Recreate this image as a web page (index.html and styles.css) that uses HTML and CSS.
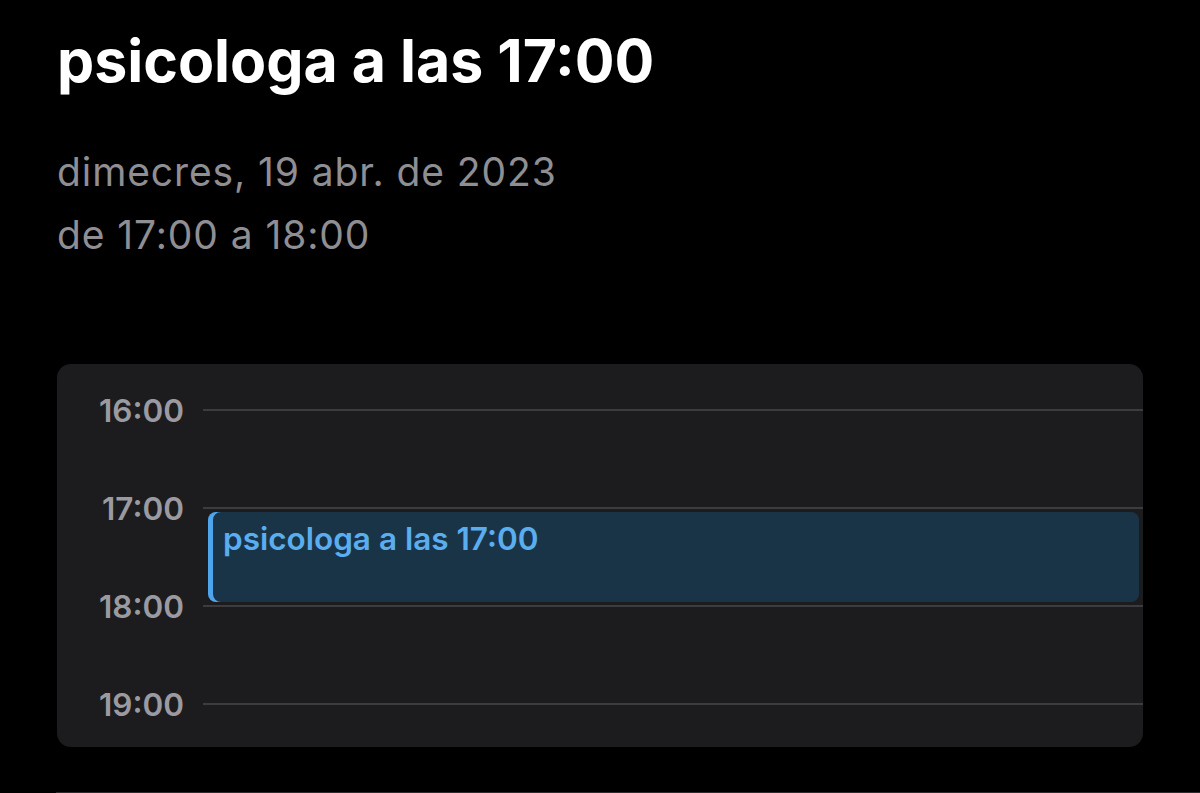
FILE: index.html
```html
<!DOCTYPE html>
<html lang="ca">
<head>
<meta charset="utf-8">
<title>psicologa a las 17:00</title>
<link rel="stylesheet" href="styles.css">
</head>
<body>
<main class="detail">
  <h1 class="title">psicologa a las 17:00</h1>
  <div class="when">
    <p class="when-line">dimecres, 19 abr. de 2023</p>
    <p class="when-line">de 17:00 a 18:00</p>
  </div>
  <section class="day">
    <div class="hour"><span class="hour-label">16:00</span><span class="hour-rule"></span></div>
    <div class="hour"><span class="hour-label">17:00</span><span class="hour-rule"></span></div>
    <div class="hour"><span class="hour-label">18:00</span><span class="hour-rule"></span></div>
    <div class="hour"><span class="hour-label">19:00</span><span class="hour-rule"></span></div>
    <div class="event"><span class="event-title">psicologa a las 17:00</span></div>
  </section>
</main>
<div class="separator"></div>
</body>
</html>
```

FILE: styles.css
```css
* {
  box-sizing: border-box;
}

html, body {
  margin: 0;
  padding: 0;
  background: #000;
  height: 793px;
  overflow: hidden;
}

body {
  font-family: Inter, "Noto Sans", "Liberation Sans", sans-serif;
  color: #fff;
  display: flex;
  flex-direction: column;
}

.detail {
  padding: 0 57px;
  flex: 1;
}

.title {
  margin: 0;
  padding-top: 24px;
  font-size: 59px;
  line-height: 74px;
  font-weight: 700;
}

.when {
  margin-top: 42px;
}

.when-line {
  margin: 0;
  font-size: 39px;
  line-height: 63px;
  letter-spacing: 0.9px;
  color: #8e8e93;
  font-weight: 400;
}

.day {
  position: relative;
  margin-top: 98px;
  height: 383px;
  background: #1c1c1e;
  border-radius: 14px;
  padding: 30px 0 27px;
  display: flex;
  flex-direction: column;
  gap: 66px;
}

.hour {
  height: 32px;
  display: flex;
  align-items: center;
  gap: 19px;
}

.hour-label {
  width: 127px;
  text-align: right;
  font-size: 31.5px;
  font-weight: 600;
  color: #9a9aa0;
  line-height: 32px;
  padding-top: 2px;
}

.hour-rule {
  flex: 1;
  height: 2px;
  background: #3c3c40;
}

/* event block laid over the 17:00–18:00 slot, with its calendar colour strip */
.event {
  position: absolute;
  left: 151px;
  right: 4px;
  top: 148px;
  height: 90px;
  background: #1a3447;
  box-shadow: inset 5px 0 0 #4ea5ec;
  border-radius: 8px;
  padding: 8px 10px 0 15px;
}

.event-title {
  font-size: 31.5px;
  font-weight: 600;
  color: #5aaeef;
  line-height: 38px;
}

.separator {
  height: 1px;
  margin-left: 56px;
  background: #2c2c2e;
}
```
